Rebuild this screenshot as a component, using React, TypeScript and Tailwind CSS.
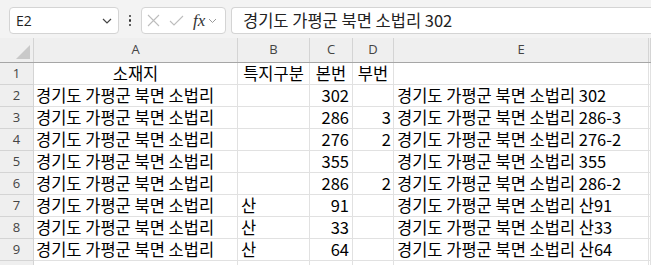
import React from "react";

const rows: { a: string; b: string; c: string; d: string; e: string }[] = [
  { a: "경기도 가평군 북면 소법리", b: "", c: "302", d: "", e: "경기도 가평군 북면 소법리 302" },
  { a: "경기도 가평군 북면 소법리", b: "", c: "286", d: "3", e: "경기도 가평군 북면 소법리 286-3" },
  { a: "경기도 가평군 북면 소법리", b: "", c: "276", d: "2", e: "경기도 가평군 북면 소법리 276-2" },
  { a: "경기도 가평군 북면 소법리", b: "", c: "355", d: "", e: "경기도 가평군 북면 소법리 355" },
  { a: "경기도 가평군 북면 소법리", b: "", c: "286", d: "2", e: "경기도 가평군 북면 소법리 286-2" },
  { a: "경기도 가평군 북면 소법리", b: "산", c: "91", d: "", e: "경기도 가평군 북면 소법리 산91" },
  { a: "경기도 가평군 북면 소법리", b: "산", c: "33", d: "", e: "경기도 가평군 북면 소법리 산33" },
  { a: "경기도 가평군 북면 소법리", b: "산", c: "64", d: "", e: "경기도 가평군 북면 소법리 산64" },
];

const grid = "grid grid-cols-[34px_204px_72px_43px_41px_255px_1fr]";
const cell = "h-[22px] border-r border-b border-[#e1e1e1] overflow-visible whitespace-nowrap flex items-center text-[16.5px] leading-none text-black";
const rh = "h-[22px] border-r border-b border-[#d4d4d4] bg-[#efefef] flex items-center justify-center text-[13px] text-[#444] font-['Open_Sans',sans-serif]";

export default function App() {
  return (
    <div className="w-[651px] h-[265px] overflow-hidden bg-white font-['Noto_Sans_CJK_KR',sans-serif]">
      {/* toolbar */}
      <div className="h-[38px] bg-[#f3f3f3] flex items-start pt-[7px] pl-[9px]">
        <div className="w-[110px] h-[27px] bg-white border border-[#d4d4d4] rounded-[4px] flex items-center pl-[6px] pr-[6px] justify-between">
          <span className="text-[14px] text-[#222] font-['Open_Sans',sans-serif]">E2</span>
          <svg width="10" height="6" viewBox="0 0 10 6"><path d="M1 1 L5 5 L9 1" fill="none" stroke="#444" strokeWidth="1.2" /></svg>
        </div>
        <div className="w-[22px] h-[27px] flex flex-col items-center justify-center gap-[2px]">
          <span className="w-[2.5px] h-[2.5px] rounded-full bg-[#333]" />
          <span className="w-[2.5px] h-[2.5px] rounded-full bg-[#333]" />
          <span className="w-[2.5px] h-[2.5px] rounded-full bg-[#333]" />
        </div>
        <div className="w-[85px] h-[27px] bg-white border border-[#d4d4d4] rounded-[4px] flex items-center pl-[5px] gap-[9px]">
          <svg width="13" height="13" viewBox="0 0 13 13"><path d="M1 1 L12 12 M12 1 L1 12" stroke="#bdbdbd" strokeWidth="1.1" /></svg>
          <svg width="15" height="11" viewBox="0 0 15 11"><path d="M1 6 L5 10 L14 1" fill="none" stroke="#bdbdbd" strokeWidth="1.1" /></svg>
          <div className="flex items-center gap-[3px]">
            <span className="text-[17px] italic text-[#333] font-['Liberation_Serif',serif] leading-none">fx</span>
            <svg width="9" height="6" viewBox="0 0 9 6"><path d="M1 1 L4.5 4.5 L8 1" fill="none" stroke="#999" strokeWidth="1" /></svg>
          </div>
        </div>
        <div className="ml-[5px] flex-1 h-[27px] bg-white border border-r-0 border-[#d4d4d4] rounded-l-[4px] flex items-center pl-[11px]">
          <span className="text-[16.5px] leading-none text-[#222]">경기도 가평군 북면 소법리 302</span>
        </div>
      </div>
      {/* column header */}
      <div className={grid + " h-[25px] bg-[#efefef] border-b border-[#a6a6a6]"}>
        <div className="border-r border-[#d4d4d4] relative">
          <svg className="absolute left-[16px] top-[7px]" width="14" height="14" viewBox="0 0 14 14"><path d="M14 0 L14 14 L0 14 Z" fill="#c9c9c9" /></svg>
        </div>
        {["A", "B", "C", "D", "E", ""].map((l, i) => (
          <div key={i} className="border-r border-[#d4d4d4] flex items-center justify-center text-[13px] text-[#444] font-['Open_Sans',sans-serif]">{l}</div>
        ))}
      </div>
      {/* row 1 */}
      <div className={grid}>
        <div className={rh + " h-[21px]"}>1</div>
        <div className={cell + " h-[21px] justify-center"}>소재지</div>
        <div className={cell + " h-[21px] justify-center"}>특지구분</div>
        <div className={cell + " h-[21px] justify-center"}>본번</div>
        <div className={cell + " h-[21px] justify-center"}>부번</div>
        <div className={cell + " h-[21px]"} />
        <div className={cell + " h-[21px]"} />
      </div>
      {rows.map((r, i) => (
        <div key={i} className={grid}>
          <div className={rh}>{i + 2}</div>
          <div className={cell + " pl-[2px]"}>{r.a}</div>
          <div className={cell + " pl-[3px]"}>{r.b}</div>
          <div className={cell + " justify-end pr-[3px]"}>{r.c}</div>
          <div className={cell + " justify-end pr-[2px]"}>{r.d}</div>
          <div className={cell + " pl-[3px] text-[#404040]"}>{r.e}</div>
          <div className={cell} />
        </div>
      ))}
      <div className={grid}>
        <div className={rh}></div>
        <div className={cell} />
        <div className={cell} />
        <div className={cell} />
        <div className={cell} />
        <div className={cell} />
        <div className={cell} />
      </div>
    </div>
  );
}
